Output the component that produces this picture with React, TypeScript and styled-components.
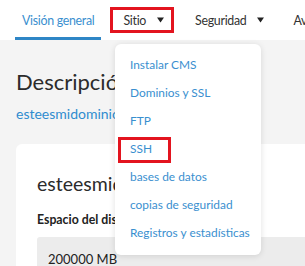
import React from 'react';
import styled, { createGlobalStyle } from 'styled-components';

const GlobalStyle = createGlobalStyle`
    html, body {
        margin: 0;
        padding: 0;
        overflow: hidden;
        background: #f4f4f4;
        font-family: Lato, 'Noto Sans', sans-serif;
        color: #333;
    }
`;

const Page = styled.div`
    position: relative;
    width: 305px;
    height: 266px;
    overflow: hidden;
    background: #f4f4f4;
`;

const NavBar = styled.nav`
    display: flex;
    align-items: stretch;
    height: 40px;
    padding-left: 15px;
    background: #fff;
    white-space: nowrap;
`;

const Tab = styled.div<{ $active?: boolean; $boxed?: boolean; $gap: number }>`
    display: flex;
    align-items: center;
    flex-shrink: 0;
    box-sizing: border-box;
    padding: 3px ${(p) => (p.$active ? '7px' : '10px')} 0;
    margin-right: ${(p) => p.$gap}px;
    font-size: 12.4px;
    letter-spacing: -0.3px;
    color: ${(p) => (p.$active ? '#3a8fcf' : '#333')};
    border-bottom: 3px solid ${(p) => (p.$active ? '#2f86c6' : 'transparent')};
    ${(p) =>
        p.$boxed &&
        `
        height: 26px;
        margin-top: 7px;
        padding: 0 7px 0 10px;
        border: 3px solid #e3141f;
        `}
`;

const Caret = styled.svg`
    margin-left: 11px;
    width: 7px;
    height: 6px;
    fill: #222;
`;

const Main = styled.main`
    padding: 28px 0 0 16px;
`;

const Heading = styled.h1`
    margin: 0;
    font-size: 22px;
    font-weight: 400;
    line-height: 28px;
    color: #2b2b2b;
    white-space: nowrap;
`;

const DomainLink = styled.a`
    display: block;
    margin-top: 9px;
    font-size: 14px;
    line-height: 18px;
    color: #2f8ccf;
    text-decoration: none;
`;

const Card = styled.section`
    margin-top: 21px;
    padding: 28px 0 0 21px;
    background: #fff;
    border-radius: 6px 0 0 0;
    height: 200px;
`;

const CardTitle = styled.h2`
    margin: 0;
    font-size: 19.5px;
    font-weight: 400;
    line-height: 24px;
    color: #2b2b2b;
    white-space: nowrap;
`;

const FieldLabel = styled.label`
    display: block;
    margin-top: 16px;
    font-size: 12.3px;
    font-weight: 700;
    line-height: 16px;
    color: #222;
    white-space: nowrap;
`;

const FieldBox = styled.div`
    margin-top: 9px;
    padding: 13px 11px;
    font-size: 13px;
    line-height: 18px;
    background: #ececec;
    border-radius: 3px 0 0 3px;
    color: #222;
`;

const Menu = styled.ul`
    position: absolute;
    left: 115px;
    top: 44px;
    width: 146px;
    margin: 0;
    padding: 8px 0 7px;
    list-style: none;
    background: #fff;
    border-radius: 6px;
    box-shadow: 0 1px 6px rgba(0, 0, 0, 0.12);
`;

const MenuItem = styled.li`
    height: 28px;
    display: flex;
    align-items: center;
    padding-left: 3px;
`;

const MenuLink = styled.a<{ $boxed?: boolean }>`
    box-sizing: border-box;
    display: flex;
    align-items: center;
    height: 26px;
    padding: 0 0 3px 9px;
    border: 3px solid ${(p) => (p.$boxed ? '#e3141f' : 'transparent')};
    width: ${(p) => (p.$boxed ? '53px' : 'auto')};
    font-size: 11.9px;
    color: #3a8fcf;
    text-decoration: none;
    white-space: nowrap;
`;

const menuItems = [
    'Instalar CMS',
    'Dominios y SSL',
    'FTP',
    'SSH',
    'bases de datos',
    'copias de seguridad',
    'Registros y estadísticas',
];

const DownCaret = () => (
    <Caret viewBox="0 0 7 6">
        <path d="M0 0.5h7L3.5 5.5z" />
    </Caret>
);

export default function App() {
    return (
        <Page>
            <GlobalStyle />
            <NavBar>
                <Tab $active $gap={9}>
                    Visión general
                </Tab>
                <Tab $boxed $gap={11}>
                    Sitio
                    <DownCaret />
                </Tab>
                <Tab $gap={9}>
                    Seguridad
                    <DownCaret />
                </Tab>
                <Tab $gap={0}>Avanzado</Tab>
            </NavBar>
            <Main>
                <Heading>Descripción general</Heading>
                <DomainLink>esteesmidominio.com</DomainLink>
                <Card>
                    <CardTitle>esteesmidominio.com</CardTitle>
                    <FieldLabel>Espacio del disco</FieldLabel>
                    <FieldBox>200000 MB</FieldBox>
                </Card>
            </Main>
            <Menu>
                {menuItems.map((item) => (
                    <MenuItem key={item}>
                        <MenuLink $boxed={item === 'SSH'}>{item}</MenuLink>
                    </MenuItem>
                ))}
            </Menu>
        </Page>
    );
}
